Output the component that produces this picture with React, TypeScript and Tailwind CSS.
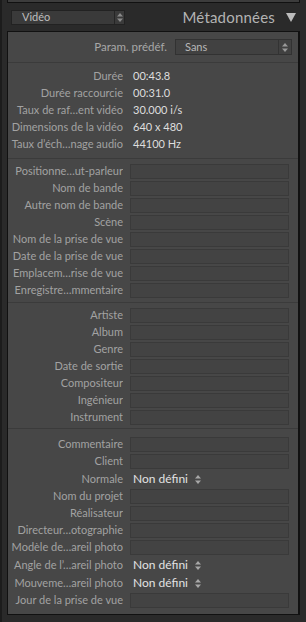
import React from 'react';

type Row = { label: string; kind: 'text' | 'box' | 'popup'; value?: string };

const infoRows: Row[] = [
	{ label: 'Durée', kind: 'text', value: '00:43.8' },
	{ label: 'Durée raccourcie', kind: 'text', value: '00:31.0' },
	{ label: 'Taux de raf…ent vidéo', kind: 'text', value: '30.000 i/s' },
	{ label: 'Dimensions de la vidéo', kind: 'text', value: '640 x 480' },
	{ label: 'Taux d’éch…nage audio', kind: 'text', value: '44100 Hz' },
];

const tapeRows: Row[] = [
	{ label: 'Positionne…ut-parleur', kind: 'box' },
	{ label: 'Nom de bande', kind: 'box' },
	{ label: 'Autre nom de bande', kind: 'box' },
	{ label: 'Scène', kind: 'box' },
	{ label: 'Nom de la prise de vue', kind: 'box' },
	{ label: 'Date de la prise de vue', kind: 'box' },
	{ label: 'Emplacem…rise de vue', kind: 'box' },
	{ label: 'Enregistre…mmentaire', kind: 'box' },
];

const musicRows: Row[] = [
	{ label: 'Artiste', kind: 'box' },
	{ label: 'Album', kind: 'box' },
	{ label: 'Genre', kind: 'box' },
	{ label: 'Date de sortie', kind: 'box' },
	{ label: 'Compositeur', kind: 'box' },
	{ label: 'Ingénieur', kind: 'box' },
	{ label: 'Instrument', kind: 'box' },
];

const shotRows: Row[] = [
	{ label: 'Commentaire', kind: 'box' },
	{ label: 'Client', kind: 'box' },
	{ label: 'Normale', kind: 'popup', value: 'Non défini' },
	{ label: 'Nom du projet', kind: 'box' },
	{ label: 'Réalisateur', kind: 'box' },
	{ label: 'Directeur…otographie', kind: 'box' },
	{ label: 'Modèle de…areil photo', kind: 'box' },
	{ label: 'Angle de l’…areil photo', kind: 'popup', value: 'Non défini' },
	{ label: 'Mouveme…areil photo', kind: 'popup', value: 'Non défini' },
	{ label: 'Jour de la prise de vue', kind: 'box' },
];

const Stepper: React.FC<{ color?: string }> = ({ color = '#9a9a9a' }) => (
	<svg width="6" height="9" viewBox="0 0 6 9">
		<polygon points="0,3.5 3,0 6,3.5" fill={ color } />
		<polygon points="0,5.5 3,9 6,5.5" fill={ color } />
	</svg>
);

const MetaRow: React.FC<{ row: Row }> = ({ row }) => (
	<div className={ `flex items-center ${ row.kind === 'popup' ? 'h-[18px]' : 'h-[17px]' }` }>
		<div className="w-[115px] shrink-0 text-right text-[#a2a2a2] whitespace-nowrap overflow-hidden">
			{ row.label }
		</div>
		<div className="ml-[7px] flex items-center">
			{ row.kind === 'box' && (
				<div className="w-[159px] h-[15px] bg-[#434343] border border-[#3a3a3a]" />
			) }
			{ row.kind === 'text' && (
				<span className="ml-[3px] text-[#dedede]">{ row.value }</span>
			) }
			{ row.kind === 'popup' && (
				<span className="ml-[3px] flex items-center gap-[7px] text-[#e2e2e2] text-[12px]">
					{ row.value }
					<Stepper color="#a8a8a8" />
				</span>
			) }
		</div>
	</div>
);

const Section: React.FC<{ rows: Row[]; className: string }> = ({ rows, className }) => (
	<div className={ `flex flex-col border-b border-[#3b3b3b] ${ className }` }>
		{ rows.map((row) => (
			<MetaRow key={ row.label } row={ row } />
		)) }
	</div>
);

export default function App() {
	return (
		<div
			className="w-[306px] h-[622px] bg-[#2a2a2a] border-l-2 border-[#1c1c1c] overflow-hidden text-[11px]"
			style={ { fontFamily: 'Lato, "Open Sans", sans-serif' } }
		>
			<div className="ml-[5px] w-[293px] flex flex-col">
				{/* bottom of the previous panel */}
				<div className="h-[3px] bg-[#3c3c3c] border-b border-x border-[#111]" />

				{/* header */}
				<div className="h-[28px] flex items-center pl-[4px] pr-[3px]">
					<div className="w-[114px] h-[15px] flex items-center bg-[#3a3a3a] border border-[#222]">
						<span className="flex-1 pl-[10px] text-[#bdbdbd] text-[11px]">Vidéo</span>
						<div className="w-[10px] h-full flex items-center justify-center border-l border-[#252525]">
							<Stepper color="#8a8a8a" />
						</div>
					</div>
					<div className="flex-1" />
					<span className="text-[15px] text-[#b3b3b3] tracking-[0.2px]">Métadonnées</span>
					<svg className="ml-[11px] mr-[1px]" width="10" height="9" viewBox="0 0 10 9">
						<polygon points="0,0 10,0 5,9" fill="#bcbcbc" />
					</svg>
				</div>

				{/* panel */}
				<div className="h-[584px] bg-[#474747] border-t border-l border-r-2 border-b border-[#111] flex flex-col">
					<div className="h-[31px] flex items-center justify-end pr-[6px] border-b border-[#3b3b3b]">
						<span className="text-[#a8a8a8] text-[11.5px] mr-[8px]">Param. prédéf.</span>
						<div className="w-[117px] h-[16px] flex items-center bg-[#414141] border border-[#323232]">
							<span className="flex-1 pl-[9px] text-[#b8b8b8]">Sans</span>
							<div className="w-[13px] h-full flex items-center justify-center border-l border-[#333]">
								<Stepper color="#9a9a9a" />
							</div>
						</div>
					</div>
					<Section rows={ infoRows } className="pt-[5px] pb-[5px]" />
					<Section rows={ tapeRows } className="pt-[4px] pb-[3px]" />
					<Section rows={ musicRows } className="pt-[4px] pb-[2px]" />
					<div className="flex flex-col pt-[7px]">
						{ shotRows.map((row) => (
							<MetaRow key={ row.label } row={ row } />
						)) }
					</div>
				</div>
			</div>
		</div>
	);
}
